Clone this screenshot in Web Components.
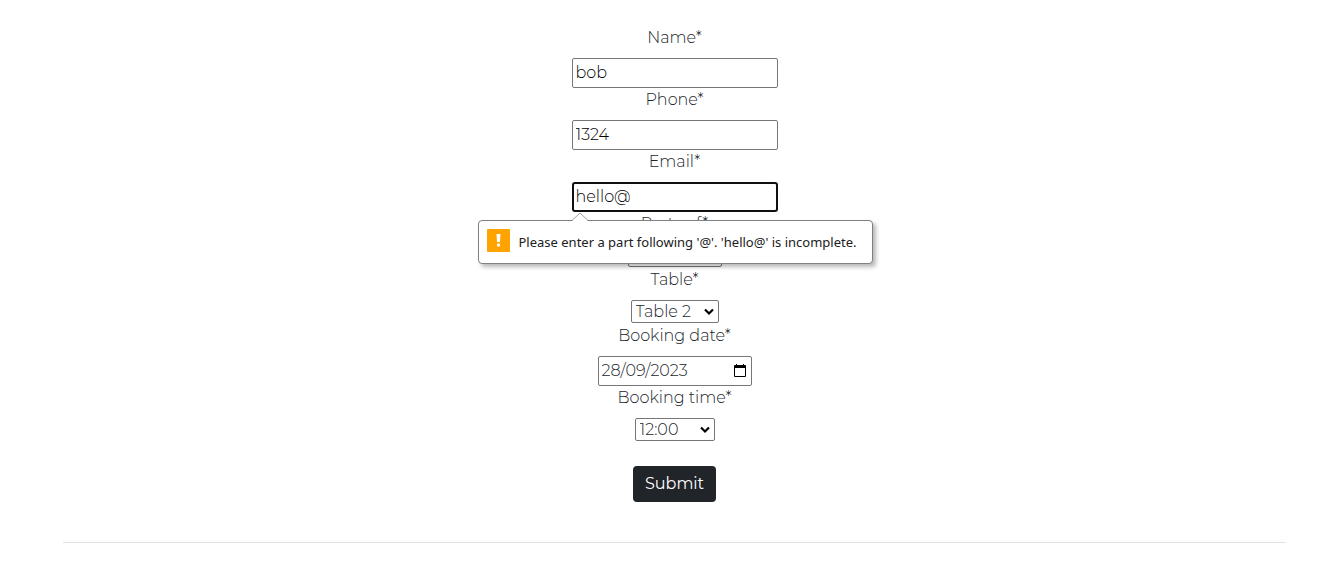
<!DOCTYPE html>
<html lang="en-GB">
<head>
<meta charset="utf-8">
<title>Table booking</title>
<style>
body { margin: 0; background: #fff; color: #212529; font: 300 16px/24px Montserrat, Inter, sans-serif; }
</style>
</head>
<body>
<booking-form></booking-form>
<script>
class FormField extends HTMLElement {
  connectedCallback() {
    const kind = this.getAttribute('kind') || 'text';
    const value = this.getAttribute('value');
    let control;
    if (kind === 'select') {
      control = `<select id="control"><option>${value}</option></select>
        <svg class="chevron" viewBox="0 0 10 8" aria-hidden="true"><path d="M1 1.500l4 4 4-4" fill="none" stroke="#000" stroke-width="2.200"/></svg>`;
    } else if (kind === 'date') {
      control = `<input id="control" type="text" inputmode="numeric" value="${value}">
        <button type="button" aria-label="Open calendar"><svg viewBox="0 0 14 14" aria-hidden="true"><path d="M3 0h1v1h6V0h1v1h1q1 0 1 1v10q0 1-1 1H2q-1 0-1-1V2q0-1 1-1h1zM2 4v8h10V4z" fill="#000" fill-rule="evenodd"/></svg></button>`;
    } else {
      control = `<input id="control" type="${kind}" value="${value}">`;
    }
    this.attachShadow({ mode: 'open' }).innerHTML = `
      <style>
        :host { display: flex; flex-direction: column; align-items: center; gap: 8px; }
        .box { position: relative; width: var(--field-width, 206px); height: 30px; }
        input, select { box-sizing: border-box; display: block; width: 100%; height: 100%; margin: 0;
          border: 1px solid #767676; border-radius: 2px; background: #fff; color: #000; font: inherit; outline: none; }
        input { padding: 0 3px 2px; }
        :host([kind="date"]) input, select { color: #212529; }
        :host([kind="select"]) .box { height: 23px; margin-bottom: 1px; }
        select { appearance: none; padding: 0 20px 0 4px; line-height: 21px; }
        :host([active]) input { border: 2px solid #101010; border-radius: 3px; padding: 0 2px 2px; }
        .chevron { position: absolute; right: 5px; top: 8px; width: 10px; height: 8px; pointer-events: none; }
        button { position: absolute; right: 5px; top: 8px; width: 14px; height: 14px; padding: 0; border: 0; background: none; }
        button svg { display: block; width: 14px; height: 14px; }
      </style>
      <label for="control"><slot></slot></label>
      <div class="box">${control}<slot name="message"></slot></div>`;
  }
}
customElements.define('form-field', FormField);

class ValidationBubble extends HTMLElement {
  connectedCallback() {
    this.setAttribute('role', 'alert');
    this.attachShadow({ mode: 'open' }).innerHTML = `
      <style>
        :host { position: absolute; z-index: 2; top: 38px; left: -94px; box-sizing: border-box; width: 395px; height: 44px;
          display: flex; align-items: center; gap: 9px; padding: 0 8px; border: 1px solid #808080; border-radius: 4px;
          background: #fff; color: #202020; box-shadow: 3px 3px 4px rgba(0,0,0,.28);
          font: 400 13px/18px "Segoe UI", "Noto Sans", sans-serif; white-space: nowrap; }
        .tip { position: absolute; left: 92px; top: -9px; width: 18px; height: 9px; }
        .mark { flex: none; width: 23px; height: 23px; margin-top: -3px; }
      </style>
      <svg class="tip" viewBox="0 0 18 9" aria-hidden="true"><path d="M1 9l8-8 8 8z" fill="#fff"/><path d="M1 8.500l8-7.500 8 7.500" fill="none" stroke="#a0a0a0"/></svg>
      <svg class="mark" viewBox="0 0 23 23" aria-hidden="true"><rect width="23" height="23" rx="1" fill="#ffa300"/><path d="M9.500 5h4l-.5 8h-3z" fill="#fff"/><circle cx="11.500" cy="16" r="1.700" fill="#fff"/></svg>
      <span><slot></slot></span>`;
  }
}
customElements.define('validation-bubble', ValidationBubble);

class BookingForm extends HTMLElement {
  connectedCallback() {
    this.attachShadow({ mode: 'open' }).innerHTML = `
      <style>
        :host { display: block; padding: 26px 55px 0 63px; }
        form { display: flex; flex-direction: column; align-items: center; }
        .party { --field-width: 94px; }
        .table { --field-width: 88px; }
        .date { --field-width: 154px; }
        .time { --field-width: 80px; }
        button { height: 36px; margin: 24px 0 40px; padding: 0 12px; border: 0; border-radius: 4px;
          background: #212529; color: #fff; font: inherit; font-weight: 400; }
        hr { height: 1px; margin: 0; border: 0; background: #e2e2e3; }
      </style>
      <form novalidate>
        <form-field value="bob">Name*</form-field>
        <form-field kind="tel" value="1324">Phone*</form-field>
        <form-field kind="email" value="hello@" active>Email*<validation-bubble slot="message">Please enter a part following '@'. 'hello@' is incomplete.</validation-bubble></form-field>
        <form-field class="party" kind="select" value="2">Party of*</form-field>
        <form-field class="table" kind="select" value="Table 2">Table*</form-field>
        <form-field class="date" kind="date" value="28/09/2023">Booking date*</form-field>
        <form-field class="time" kind="select" value="12:00">Booking time*</form-field>
        <button type="submit">Submit</button>
      </form>
      <hr>`;
  }
}
customElements.define('booking-form', BookingForm);
</script>
</body>
</html>
